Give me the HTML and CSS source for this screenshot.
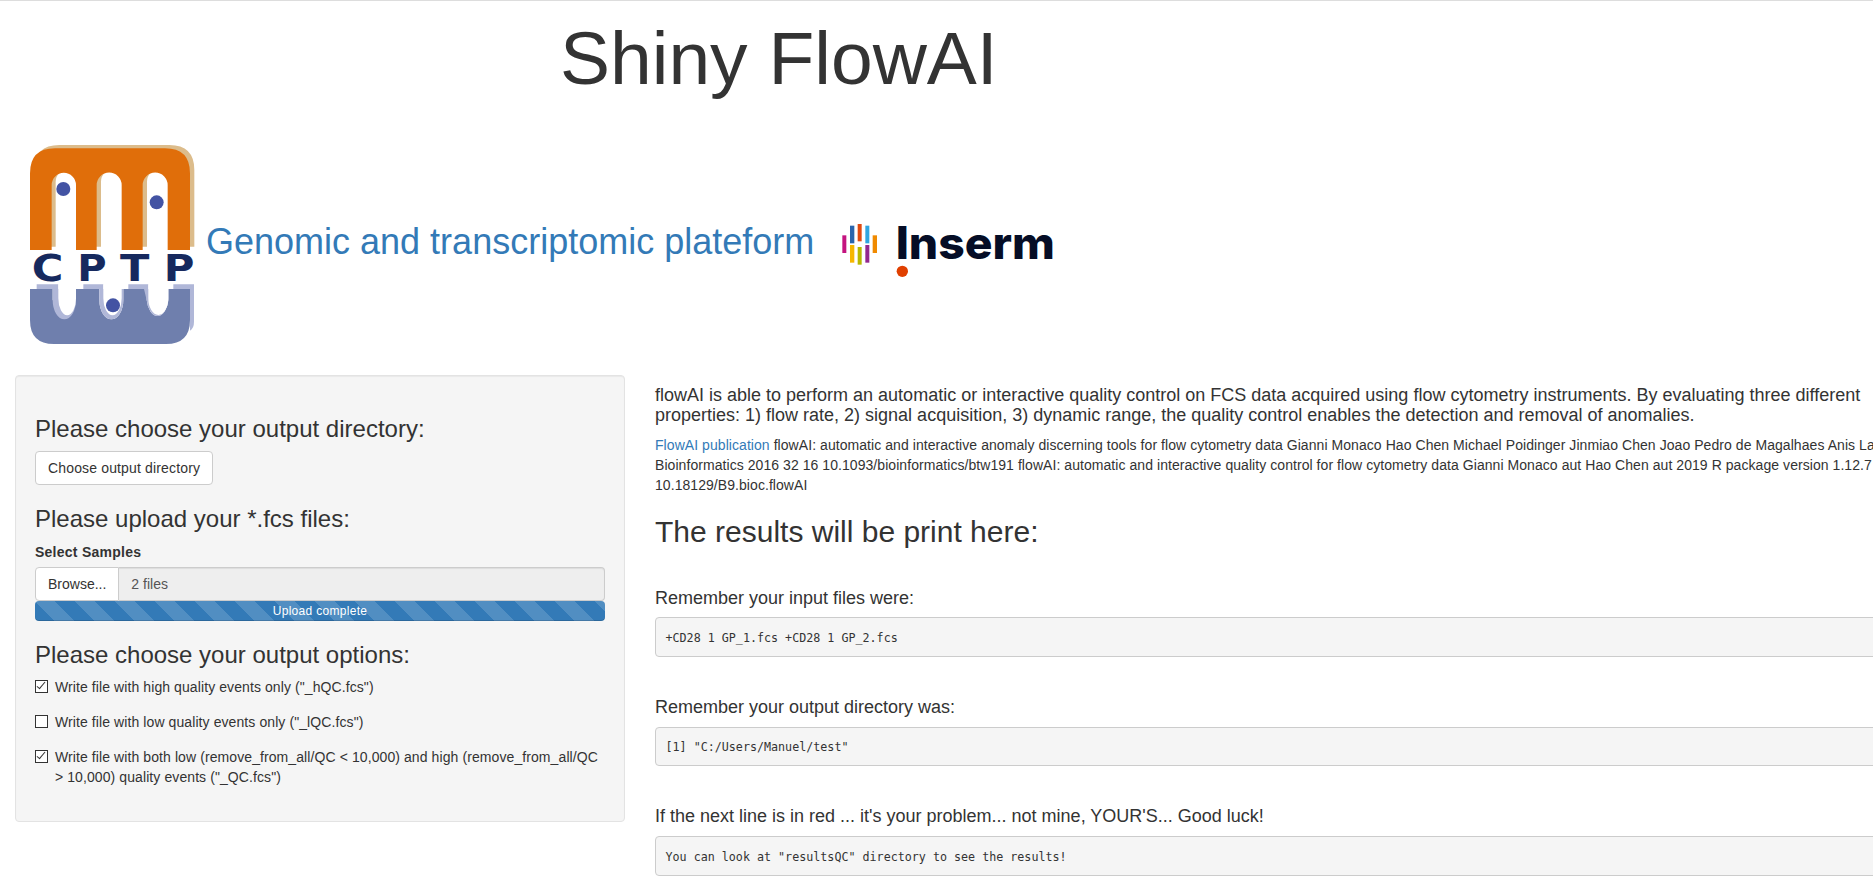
FILE: index.html
```html
<!DOCTYPE html>
<html>
<head>
  <meta charset="UTF-8">
  <title>Shiny FlowAI</title>
  <link rel="stylesheet" href="styles.css">
</head>
<body>
  <div class="page">
    <h1 class="app-title">Shiny FlowAI</h1>

    <div class="logos">
      <svg class="logo-cptp" viewBox="90 75 495 600">
        <!-- top comb -->
        <path fill="#dcbc8b" d="M103 380V150Q103 75 178 75H508Q583 75 583 150V380H516V185A37 37 0 0 0 441 185V380H378V185A37 37 0 0 0 303 185V380H241V185A37 37 0 0 0 167 185V380Z"/>
        <path fill="#e06e0a" d="M90 390V160Q90 85 165 85H495Q570 85 570 160V390H503V195A37 37 0 0 0 428 195V390H365V195A37.500 37.500 0 0 0 290 195V390H228V195A36.500 36.500 0 0 0 155 195V390Z"/>
        <!-- bottom comb -->
        <path fill="#b0b7d8" d="M110 493H175V507H110ZM250 493H310V507H250ZM385 493H445V507H385ZM520 493H582V605Q582 625 570 632V507H520Z"/>
        <path fill="#6f7fad" d="M90 507H158V540A48 58 0 0 0 228 540V507H298V540A36 58 0 0 0 370 540V507H440V540A33 58 0 0 0 505 540V507H570V600Q570 672 498 672H162Q90 672 90 600Z"/>
        <path fill="#b0b7d8" d="M158 507H228V540A35 58 0 0 1 158 540ZM298 507H370V540A36 58 0 0 1 298 540ZM432 507H505V540A33 58 0 0 1 440 540Z"/>
        <path fill="#fff" d="M175 493H228V535A26 50 0 0 1 175 535ZM310 493H365V535A27 50 0 0 1 310 535ZM445 493H505V535A30 50 0 0 1 445 535Z"/>
        <circle fill="#4353a3" cx="190" cy="207" r="21"/>
        <circle fill="#4353a3" cx="470" cy="247" r="21"/>
        <circle fill="#4353a3" cx="339" cy="556" r="21"/>
        <text class="cptp-letter" x="95" y="483" textLength="95" lengthAdjust="spacingAndGlyphs">C</text>
        <text class="cptp-letter" x="232" y="483" textLength="88" lengthAdjust="spacingAndGlyphs">P</text>
        <text class="cptp-letter" x="360" y="483" textLength="88" lengthAdjust="spacingAndGlyphs">T</text>
        <text class="cptp-letter" x="491" y="483" textLength="92" lengthAdjust="spacingAndGlyphs">P</text>
      </svg>

      <a class="platform-link" href="#">Genomic and transcriptomic plateform</a>

      <svg class="logo-inserm" viewBox="120 90 645 180">
        <rect fill="#c4147f" x="124" y="139" width="12" height="53"/>
        <rect fill="#2a65ac" x="147" y="110" width="13" height="53"/>
        <rect fill="#e04a10" x="170" y="105" width="12" height="52"/>
        <rect fill="#30a6e0" x="193" y="110" width="12" height="53"/>
        <rect fill="#f08a00" x="215" y="139" width="13" height="53"/>
        <rect fill="#f6b700" x="147" y="168" width="13" height="53"/>
        <rect fill="#b7b900" x="170" y="174" width="12" height="53"/>
        <rect fill="#92278f" x="193" y="168" width="12" height="53"/>
        <circle fill="#e04000" cx="304" cy="247" r="17"/>
        <text class="inserm-word" x="284" y="210" textLength="478" lengthAdjust="spacingAndGlyphs">Inserm</text>
      </svg>
    </div>

    <div class="row">
      <div class="sidebar">
        <div class="well">
          <h3>Please choose your output directory:</h3>
          <button class="btn btn-choose">Choose output directory</button>

          <h3>Please upload your *.fcs files:</h3>
          <div class="form-group">
            <label class="field-label">Select Samples</label>
            <div class="input-group">
              <span class="btn btn-browse">Browse...</span>
              <span class="file-name">2 files</span>
            </div>
            <div class="progress">Upload complete</div>
          </div>

          <h3>Please choose your output options:</h3>
          <label class="checkbox"><input type="checkbox" checked><span>Write file with high quality events only ("_hQC.fcs")</span></label>
          <label class="checkbox"><input type="checkbox"><span>Write file with low quality events only ("_lQC.fcs")</span></label>
          <label class="checkbox"><input type="checkbox" checked><span>Write file with both low (remove_from_all/QC &lt; 10,000) and high (remove_from_all/QC &gt; 10,000) quality events ("_QC.fcs")</span></label>
        </div>
      </div>

      <div class="main">
        <h4>flowAI is able to perform an automatic or interactive quality control on FCS data acquired using flow cytometry instruments. By evaluating three different properties: 1) flow rate, 2) signal acquisition, 3) dynamic range, the quality control enables the detection and removal of anomalies.</h4>
        <p class="citation"><a href="#">FlowAI publication</a> flowAI: automatic and interactive anomaly discerning tools for flow cytometry data Gianni Monaco Hao Chen Michael Poidinger Jinmiao Chen Joao Pedro de Magalhaes Anis Larbi Bioinformatics 2016 32 16 10.1093/bioinformatics/btw191 flowAI: automatic and interactive quality control for flow cytometry data Gianni Monaco aut Hao Chen aut 2019 R package version 1.12.7 10.18129/B9.bioc.flowAI</p>
        <h2>The results will be print here:</h2>
        <br>
        <h4>Remember your input files were:</h4>
        <pre>+CD28 1 GP_1.fcs +CD28 1 GP_2.fcs</pre>
        <br>
        <h4>Remember your output directory was:</h4>
        <pre>[1] "C:/Users/Manuel/test"</pre>
        <br>
        <h4>If the next line is in red ... it's your problem... not mine, YOUR'S... Good luck!</h4>
        <pre>You can look at "resultsQC" directory to see the results!</pre>
      </div>
    </div>
  </div>
</body>
</html>
```

FILE: styles.css
```css
html, body {
  margin: 0;
  height: 882px;
  overflow: hidden;
  background: #fff;
}

.page {
  width: 1920px;
  border-top: 1px solid #ddd;
  font-family: "Liberation Sans", Arial, sans-serif;
  font-size: 14px;
  line-height: 1.42857;
  color: #333;
  box-sizing: border-box;
}

h2, h3, h4 {
  font-weight: 500;
  line-height: 1.1;
}

h2 { font-size: 30px; margin: 19px 0 10px; }
h3 { font-size: 24px; margin: 20px 0 9px; padding-top: 1px; }
h4 { font-size: 18px; margin: 10px 0 9px; padding-top: 1px; }
p { margin: 0 0 10px; }

a {
  color: #337ab7;
  text-decoration: none;
}

.app-title {
  margin: 16px 0 0 560px;
  font-size: 75px;
  font-weight: 500;
  line-height: 82px;
}

.logos {
  display: flex;
  align-items: center;
  margin-top: 46px;
  padding-left: 30px;
}

.logo-cptp {
  width: 165px;
  height: 200px;
  display: block;
}

.cptp-letter {
  font-family: "DejaVu Sans", sans-serif;
  font-weight: 700;
  font-size: 112px;
  fill: #16295e;
}

.platform-link {
  margin: 0 0 7px 11px;
  font-size: 36px;
  line-height: 1.1;
}

.logo-inserm {
  width: 215px;
  height: 60px;
  display: block;
  margin: 7px 0 0 27px;
}

.inserm-word {
  font-family: Inter, sans-serif;
  font-weight: 800;
  font-size: 134px;
  fill: #050d26;
}

.row {
  display: flex;
  margin-top: 30px;
}

.sidebar {
  width: 640px;
  padding: 0 15px;
  box-sizing: border-box;
}

.main {
  width: 1280px;
  padding: 0 15px;
  box-sizing: border-box;
}

.well {
  padding: 19px;
  margin-bottom: 20px;
  background: #f5f5f5;
  border: 1px solid #e3e3e3;
  border-radius: 4px;
  box-shadow: inset 0 1px 1px rgba(0, 0, 0, .05);
}

.btn {
  display: inline-block;
  padding: 7px 12px 5px;
  font: inherit;
  color: #333;
  background: #fff;
  border: 1px solid #ccc;
  border-radius: 4px;
  box-sizing: border-box;
}

.btn-choose {
  letter-spacing: .15px;
}

.form-group {
  margin-bottom: 15px;
}

.field-label {
  display: block;
  font-weight: 700;
  letter-spacing: .25px;
  padding-top: 1px;
  margin-bottom: 4px;
}

.input-group {
  display: flex;
  height: 34px;
}

.btn-browse {
  border-radius: 4px 0 0 4px;
  flex: none;
}

.file-name {
  flex: 1;
  padding: 7px 12px 5px;
  color: #555;
  background: #eee;
  border: 1px solid #ccc;
  border-left: 0;
  border-radius: 0 4px 4px 0;
  box-shadow: inset 0 1px 1px rgba(0, 0, 0, .075);
}

.progress {
  height: 20px;
  font-size: 12px;
  line-height: 20px;
  letter-spacing: .3px;
  text-align: center;
  color: #fff;
  background-color: #337ab7;
  background-image: linear-gradient(45deg, rgba(255, 255, 255, .15) 25%, transparent 25%, transparent 50%, rgba(255, 255, 255, .15) 50%, rgba(255, 255, 255, .15) 75%, transparent 75%, transparent);
  background-size: 40px 40px;
  border-radius: 4px;
  box-shadow: inset 0 -1px 0 rgba(0, 0, 0, .15);
}

.checkbox {
  display: flex;
  padding-top: 1px;
  margin-bottom: 14px;
  letter-spacing: .09px;
}

.checkbox input {
  appearance: none;
  flex: none;
  position: relative;
  width: 13px;
  height: 13px;
  margin: 2px 7px 0 0;
  background: #fff;
  border: 1px solid #333;
  box-sizing: border-box;
}

.checkbox input:checked::after {
  content: "";
  position: absolute;
  left: 3px;
  top: -1px;
  width: 3px;
  height: 8px;
  border-right: 1px solid #333;
  border-bottom: 1px solid #333;
  transform: rotate(40deg);
}

.citation {
  padding-top: 1px;
  margin-bottom: 9px;
  letter-spacing: .06px;
}

pre {
  margin: 0 0 10px;
  padding: 10.5px 9.5px 8.5px;
  font-family: "DejaVu Sans Mono", monospace;
  font-size: 11.7px;
  line-height: 18.57px;
  color: #333;
  background: #f5f5f5;
  border: 1px solid #ccc;
  border-radius: 4px;
}
```
